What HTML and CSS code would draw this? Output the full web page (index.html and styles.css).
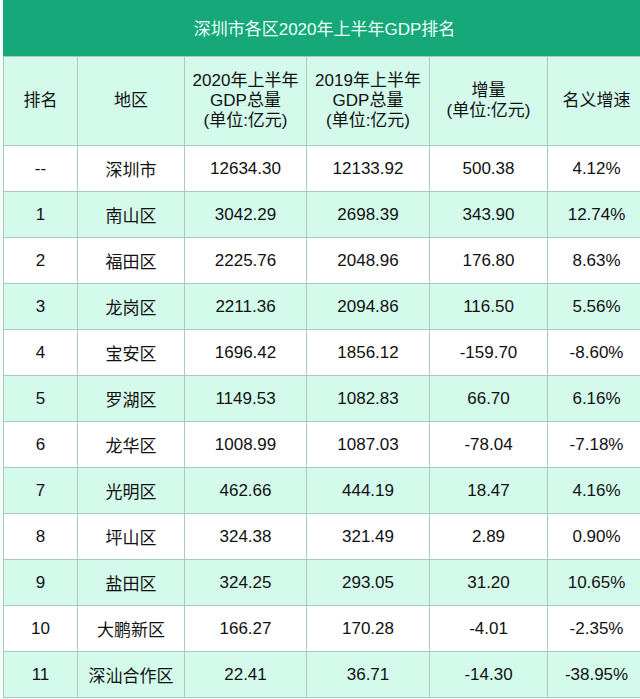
FILE: index.html
```html
<!DOCTYPE html>
<html lang="zh-CN">
<head>
<meta charset="utf-8">
<title>深圳市各区2020年上半年GDP排名</title>
<link rel="stylesheet" href="styles.css">
</head>
<body>
<div class="wrap">
<table class="gdp">
  <colgroup>
    <col class="c1"><col class="c2"><col class="c3"><col class="c4"><col class="c5"><col class="c6">
  </colgroup>
  <thead>
    <tr class="title"><th colspan="6">深圳市各区2020年上半年GDP排名</th></tr>
    <tr class="head">
      <th>排名</th>
      <th>地区</th>
      <th>2020年上半年<br>GDP总量<br>(单位:亿元)</th>
      <th>2019年上半年<br>GDP总量<br>(单位:亿元)</th>
      <th>增量<br>(单位:亿元)</th>
      <th>名义增速</th>
    </tr>
  </thead>
  <tbody>
    <tr><td>--</td><td>深圳市</td><td>12634.30</td><td>12133.92</td><td>500.38</td><td>4.12%</td></tr>
    <tr><td>1</td><td>南山区</td><td>3042.29</td><td>2698.39</td><td>343.90</td><td>12.74%</td></tr>
    <tr><td>2</td><td>福田区</td><td>2225.76</td><td>2048.96</td><td>176.80</td><td>8.63%</td></tr>
    <tr><td>3</td><td>龙岗区</td><td>2211.36</td><td>2094.86</td><td>116.50</td><td>5.56%</td></tr>
    <tr><td>4</td><td>宝安区</td><td>1696.42</td><td>1856.12</td><td>-159.70</td><td>-8.60%</td></tr>
    <tr><td>5</td><td>罗湖区</td><td>1149.53</td><td>1082.83</td><td>66.70</td><td>6.16%</td></tr>
    <tr><td>6</td><td>龙华区</td><td>1008.99</td><td>1087.03</td><td>-78.04</td><td>-7.18%</td></tr>
    <tr><td>7</td><td>光明区</td><td>462.66</td><td>444.19</td><td>18.47</td><td>4.16%</td></tr>
    <tr><td>8</td><td>坪山区</td><td>324.38</td><td>321.49</td><td>2.89</td><td>0.90%</td></tr>
    <tr><td>9</td><td>盐田区</td><td>324.25</td><td>293.05</td><td>31.20</td><td>10.65%</td></tr>
    <tr><td>10</td><td>大鹏新区</td><td>166.27</td><td>170.28</td><td>-4.01</td><td>-2.35%</td></tr>
    <tr><td>11</td><td>深汕合作区</td><td>22.41</td><td>36.71</td><td>-14.30</td><td>-38.95%</td></tr>
  </tbody>
</table>
</div>
</body>
</html>
```

FILE: styles.css
```css
html, body {
  margin: 0;
  padding: 0;
  background: #f4fdf9;
  overflow: hidden;
}
.wrap {
  width: 640px;
  height: 699px;
  overflow: hidden;
  padding-left: 3px;
  box-sizing: border-box;
}
.gdp {
  border-collapse: collapse;
  table-layout: fixed;
  width: 642px;
  font-family: "Liberation Sans", "Noto Sans CJK SC", sans-serif;
  font-size: 17px;
  color: #111111;
}
.c1 { width: 74px; }
.c2 { width: 107px; }
.c3 { width: 122px; }
.c4 { width: 123px; }
.c5 { width: 118px; }
.c6 { width: 98px; }
.gdp th, .gdp td {
  border: 1px solid #a9cbbd;
  text-align: center;
  vertical-align: middle;
  padding: 0;
  font-weight: normal;
}
.title th {
  background: #17a87a;
  color: #eafff6;
  font-size: 17px;
  height: 56px;
  border-color: #17a87a;
  border-bottom-color: #a9cbbd;
  padding-bottom: 2px;
  box-sizing: border-box;
}
.head th {
  background: #d4faeb;
  height: 88px;
  line-height: 20px;
}
.gdp tbody td {
  height: 45px;
  background: #ffffff;
}
.gdp tbody tr:nth-child(even) td {
  background: #d4faeb;
}
```
